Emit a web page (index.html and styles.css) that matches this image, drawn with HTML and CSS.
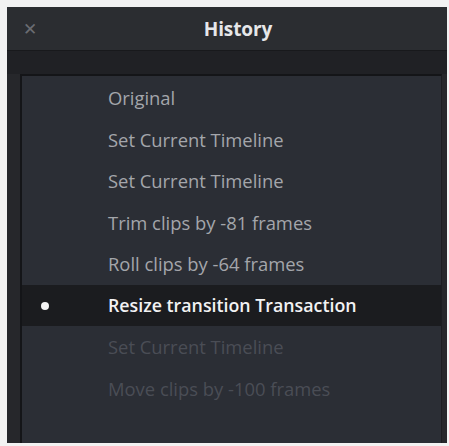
FILE: index.html
```html
<!DOCTYPE html>
<html>
<head>
<meta charset="utf-8">
<link rel="stylesheet" href="styles.css">
</head>
<body>
<div class="window">
  <div class="titlebar">
    <span class="close">&#x2715;</span>
    <span class="title">History</span>
  </div>
  <div class="band"></div>
  <div class="body">
    <ul class="list">
      <li class="row">Original</li>
      <li class="row">Set Current Timeline</li>
      <li class="row">Set Current Timeline</li>
      <li class="row">Trim clips by -81 frames</li>
      <li class="row">Roll clips by -64 frames</li>
      <li class="row current"><span class="dot"></span>Resize transition Transaction</li>
      <li class="row undone">Set Current Timeline</li>
      <li class="row undone">Move clips by -100 frames</li>
    </ul>
  </div>
</div>
</body>
</html>
```
FILE: styles.css
```css
html, body {
  margin: 0;
  padding: 0;
  background: #f2f2f2;
  width: 449px;
  height: 446px;
  overflow: hidden;
}
.window {
  margin: 7px 2px 0 7px;
  height: 436px;
  background: #26272b;
  display: flex;
  flex-direction: column;
  font-family: "Open Sans", "DejaVu Sans", sans-serif;
}
.titlebar {
  position: relative;
  height: 43px;
  flex: none;
  background: #2b2d31;
  display: flex;
  align-items: center;
  justify-content: center;
  border-bottom: 1px solid #18191c;
}
.close {
  position: absolute;
  left: 16px;
  top: 12px;
  color: #6a6c71;
  font-size: 17px;
  font-family: "DejaVu Sans", sans-serif;
}
.title {
  color: #e6e7e9;
  font-size: 19px;
  font-weight: 700;
  letter-spacing: -0.1px;
  margin-left: 22px;
}
.band {
  height: 23px;
  flex: none;
  background: #202125;
}
.body {
  flex: 1;
  margin: 0 5px 0 13px;
  background: #2b2e35;
  border-top: 2px solid #141518;
  border-left: 2px solid #141518;
  border-right: 1px solid #1c1d21;
}
.list {
  list-style: none;
  margin: 0;
  padding: 1px 0 0 0;
}
.row {
  position: relative;
  height: 41.5px;
  line-height: 41.5px;
  padding-left: 86px;
  font-size: 18.4px;
  font-weight: 500;
  color: #a4a6ab;
}
.row.current {
  background: #1b1c1f;
  color: #f2f2f3;
  font-weight: 600;
  font-size: 17.8px;
}
.row.undone {
  color: #4a4d55;
}
.dot {
  position: absolute;
  left: 19px;
  top: 17px;
  width: 8px;
  height: 8px;
  border-radius: 50%;
  background: #f4f4f4;
}
```
